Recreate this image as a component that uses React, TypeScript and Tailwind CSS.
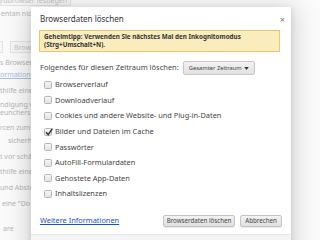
import React from "react";

const font = { fontFamily: '"Noto Sans", "Open Sans", Arial, sans-serif' };

function Checkbox({ checked }: { checked?: boolean }) {
  return (
    <div className="relative w-[8px] h-[8px] rounded-[1.5px] border border-[#b5b5b5] bg-gradient-to-b from-[#f6f6f6] to-[#e3e3e3] shrink-0">
      {checked && (
        <svg viewBox="0 0 10 10" className="absolute -left-[1px] -top-[2px] w-[10px] h-[10px]">
          <path d="M2 5.2 L4.2 7.6 L8.4 1.6" fill="none" stroke="#333" strokeWidth="1.5" />
        </svg>
      )}
    </div>
  );
}

const items: [string, boolean][] = [
  ["Browserverlauf", false],
  ["Downloadverlauf", false],
  ["Cookies und andere Website- und Plug-in-Daten", false],
  ["Bilder und Dateien im Cache", true],
  ["Passwörter", false],
  ["AutoFill-Formulardaten", false],
  ["Gehostete App-Daten", false],
  ["Inhaltslizenzen", false],
];

function BgLine({ h, children, cls = "" }: { h: string; children: React.ReactNode; cls?: string }) {
  return <div className={`${h} flex items-center whitespace-nowrap ${cls}`}>{children}</div>;
}

export default function App() {
  return (
    <div className="relative w-[320px] h-[240px] overflow-hidden bg-[#fbfbfb]" style={font}>
      {/* background page (faded) */}
      <div className="flex flex-col text-[7px] text-[#b4b4b4] leading-none">
        <div className="h-[7px] flex">
          <div className="-mt-[6px] h-[12px] w-[71px] border border-[#e3e3e3] bg-[#f7f7f7] flex items-end pb-[1px] justify-end pr-[3px] text-[#c0c0c0] overflow-hidden whitespace-nowrap">
            ndardbrowser festlegen
          </div>
        </div>
        <div className="w-[31px] overflow-hidden flex flex-col">
          <BgLine h="h-[12px]" cls="pl-[1px]">entan nicht</BgLine>
          <div className="h-[22px]" />
          <div className="h-[12px] flex gap-[7px]">
            <div className="w-[3px] h-full border border-l-0 border-[#e3e3e3] bg-[#f7f7f7] shrink-0" />
            <div className="w-[60px] h-full border border-[#e3e3e3] bg-[#f7f7f7] flex items-center pl-[3px] text-[#c4c4c4] whitespace-nowrap shrink-0">Browse</div>
          </div>
          <BgLine h="h-[16px]" cls="pt-[3px]">s Browsere</BgLine>
          <BgLine h="h-[10px]"><span className="text-[#a9bde6] underline">ormationen</span></BgLine>
          <BgLine h="h-[16px]" cls="pt-[6px]">thilfe eines</BgLine>
          <BgLine h="h-[13px]" cls="pt-[6px]">ndigung vo</BgLine>
          <BgLine h="h-[8px]">eunchers e</BgLine>
          <BgLine h="h-[15px]" cls="pt-[7px]">rcen zum s</BgLine>
          <BgLine h="h-[16px]" cls="pt-[2px] pl-[8px]">sicherheits</BgLine>
          <BgLine h="h-[16px]" cls="pt-[2px]"><span className="text-[#a9bde6]">t</span>&nbsp;vor schäd</BgLine>
          <BgLine h="h-[15px]" cls="pt-[2px]">thilfe eine</BgLine>
          <BgLine h="h-[16px]" cls="pt-[2px]">und Abstur</BgLine>
          <BgLine h="h-[16px]" cls="pt-[2px] pl-[2px]">eine "Do N</BgLine>
          <BgLine h="h-[23px]" cls="pt-[14px] pl-[3px]">are</BgLine>
        </div>
      </div>

      {/* dialog */}
      <div className="absolute left-[31px] top-[7px] w-[260px] h-[250px] bg-white shadow-[0_4px_23px_5px_rgba(0,0,0,0.15),0_2px_6px_rgba(0,0,0,0.12)] flex flex-col">
        <div className="flex items-center justify-between h-[12px] mt-[6px] pl-[9px] pr-[6px]">
          <span className="text-[8px] text-[#333]">Browserdaten löschen</span>
          <span className="text-[9px] text-[#777] leading-none">×</span>
        </div>
        <div className="mt-[5px] ml-[8px] w-[241px] border border-[#f0c36d] bg-[#f9edbe] px-[4px] py-[2px] text-[6.3px] leading-[8px] font-bold text-[#333] whitespace-nowrap">
          Geheimtipp: Verwenden Sie nächstes Mal den Inkognitomodus
          <br />
          (Strg+Umschalt+N).
        </div>
        <div className="mt-[9px] ml-[9px] flex items-center gap-[4px] h-[14px]">
          <span className="text-[7.5px] text-[#444] whitespace-nowrap">Folgendes für diesen Zeitraum löschen:</span>
          <div className="h-[14px] w-[72px] shrink-0 border border-[#c8c8c8] rounded-[2px] bg-gradient-to-b from-[#f2f2f2] to-[#e2e2e2] flex items-center justify-between pl-[5px] pr-[5px] text-[5.8px] text-[#444] whitespace-nowrap">
            <span>Gesamter Zeitraum</span>
            <svg viewBox="0 0 6 4" className="w-[5px] h-[3px] shrink-0"><path d="M0 0 L6 0 L3 4 Z" fill="#333" /></svg>
          </div>
        </div>
        <div className="mt-[2px] flex flex-col">
          {items.map(([label, checked]) => (
            <div key={label} className="h-[15.6px] flex items-center pl-[13px] gap-[3px]">
              <Checkbox checked={checked} />
              <span className="text-[7.4px] text-[#444] whitespace-nowrap">{label}</span>
            </div>
          ))}
        </div>
        <div className="mt-[13px] flex items-center justify-between pl-[9px] pr-[9px] h-[12px]">
          <span className="text-[7.4px] text-[#15c] underline whitespace-nowrap">Weitere Informationen</span>
          <div className="flex gap-[5px]">
            <div className="h-[12px] w-[72px] border border-[#c4c4c4] rounded-[2px] bg-gradient-to-b from-[#f2f2f2] to-[#e0e0e0] flex items-center justify-center text-[6.2px] text-[#444] whitespace-nowrap shadow-[0_1px_0_rgba(0,0,0,0.08)]">Browserdaten löschen</div>
            <div className="h-[12px] w-[42px] border border-[#c4c4c4] rounded-[2px] bg-gradient-to-b from-[#f2f2f2] to-[#e0e0e0] flex items-center justify-center text-[6.2px] text-[#444] whitespace-nowrap shadow-[0_1px_0_rgba(0,0,0,0.08)]">Abbrechen</div>
          </div>
        </div>
        <div className="mt-[7px] flex-1 border-t border-[#e8e8e8] bg-[#f5f5f5]" />
      </div>
    </div>
  );
}
